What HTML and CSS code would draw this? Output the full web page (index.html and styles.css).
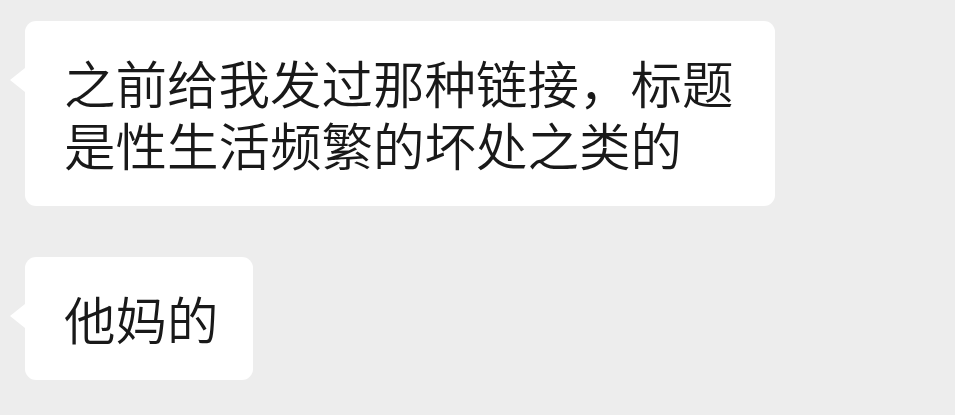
FILE: index.html
```html
<!DOCTYPE html>
<html lang="zh-CN">
<head>
<meta charset="utf-8">
<title>聊天</title>
<link rel="stylesheet" href="styles.css">
</head>
<body>
<div class="chat">
  <div class="msg">
    <div class="bubble">之前给我发过那种链接，标题是性生活频繁的坏处之类的</div>
  </div>
  <div class="msg">
    <div class="bubble">他妈的</div>
  </div>
</div>
</body>
</html>
```

FILE: styles.css
```css
html, body {
  margin: 0;
  padding: 0;
  background: #ededed;
}

.chat {
  display: flex;
  flex-direction: column;
  align-items: flex-start;
  gap: 51px;
  padding: 21px 0 0 25px;
  font-family: "Noto Sans CJK SC", "Noto Sans", sans-serif;
}

.msg {
  display: flex;
}

.bubble {
  position: relative;
  box-sizing: border-box;
  max-width: 750px;
  padding: 30px 34px 31px 39px;
  background: #ffffff;
  border-radius: 11px;
  color: #191919;
  font-size: 51.5px;
  font-weight: 350;
  line-height: 62px;
  word-break: break-all;
}

/* left-pointing tail of the bubble */
.bubble::before {
  content: "";
  position: absolute;
  left: -15px;
  top: 47px;
  border-style: solid;
  border-width: 12px 15px 12px 0;
  border-color: transparent #ffffff transparent transparent;
}
```
